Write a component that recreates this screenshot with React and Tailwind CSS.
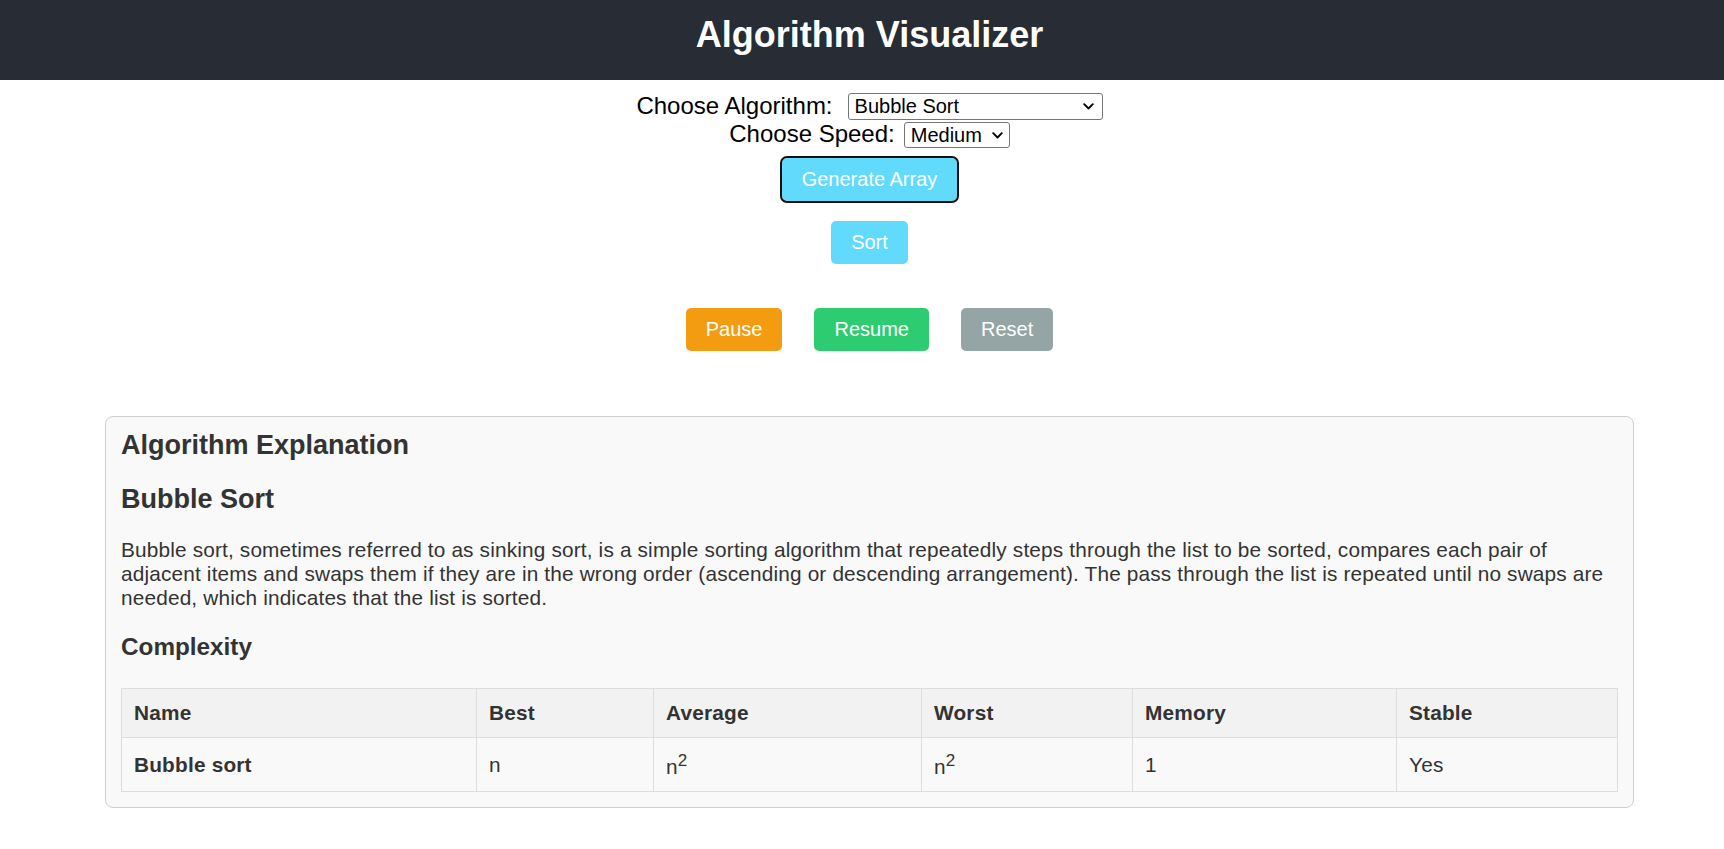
import React from "react";

function Chevron() {
  return (
    <svg width="11" height="7" viewBox="0 0 11 7" className="shrink-0">
      <polyline points="1.2,1.2 5.5,5.5 9.8,1.2" fill="none" stroke="#000" strokeWidth="1.9" strokeLinecap="round" strokeLinejoin="round" />
    </svg>
  );
}

function Btn({ children, bg, extra = "" }) {
  return (
    <button className={`rounded-[5px] px-[20px] py-[10px] text-[20px] leading-[normal] text-white ${bg} ${extra}`}>
      {children}
    </button>
  );
}

export default function App() {
  return (
    <div className="min-h-[849px] bg-white font-['Liberation_Sans',Arial,sans-serif] leading-[normal] overflow-hidden">
      <header className="h-[80px] bg-[#282c34] pt-[13.5px] pl-[15px] text-center">
        <h1 className="text-[36px] font-bold leading-[normal] text-white">Algorithm Visualizer</h1>
      </header>

      <div className="pl-[15px]">
        <div className="mt-[12px] flex flex-col items-center">
          <div className="flex items-center">
            <span className="text-[24px] leading-[normal] text-black">Choose Algorithm:</span>
            <div className="ml-[15px] flex h-[27px] w-[255px] items-center justify-between rounded-[3px] border border-[#767676] bg-white pl-[6px] pr-[8px] text-[20px] leading-[normal] text-black">
              <span>Bubble Sort</span>
              <Chevron />
            </div>
          </div>
          <div className="flex items-start">
            <span className="text-[24px] leading-[normal] text-black">Choose Speed:</span>
            <div className="ml-[9px] mt-[2px] flex h-[26px] w-[106px] items-center justify-between rounded-[3px] border border-[#767676] bg-white pl-[6px] pr-[6px] text-[20px] leading-[normal] text-black">
              <span>Medium</span>
              <Chevron />
            </div>
          </div>
        </div>

        <div className="mt-[10px] flex justify-center">
          <Btn bg="bg-[#61dafb]" extra="outline-2 outline-[#101010]">Generate Array</Btn>
        </div>
        <div className="mt-[20px] flex justify-center">
          <Btn bg="bg-[#61dafb]">Sort</Btn>
        </div>
        <div className="mt-[44px] flex justify-center gap-[32px]">
          <Btn bg="bg-[#f39c12]">Pause</Btn>
          <Btn bg="bg-[#2ecc71]">Resume</Btn>
          <Btn bg="bg-[#95a5a6]">Reset</Btn>
        </div>

        <div className="mx-auto mt-[65px] w-[1529px] rounded-[8px] border border-[#cfcfcf] bg-[#f9f9f9] px-[15px] pb-[15px] pt-[13px] text-[#333]">
          <h2 className="text-[27px] font-bold leading-[normal]">Algorithm Explanation</h2>
          <h2 className="mt-[23px] text-[27px] font-bold leading-[normal]">Bubble Sort</h2>
          <p className="mt-[23px] text-[20.8px] leading-[normal] tracking-[0.16px]">
            Bubble sort, sometimes referred to as sinking sort, is a simple sorting algorithm that repeatedly steps through the list to be sorted, compares each pair of adjacent items and swaps them if they are in the wrong order (ascending or descending arrangement). The pass through the list is repeated until no swaps are needed, which indicates that the list is sorted.
          </p>
          <h3 className="mt-[23px] text-[24.3px] font-bold leading-[normal]">Complexity</h3>
          <table className="mt-[27px] w-full table-fixed border-collapse text-[20.8px] leading-[normal] tracking-[0.2px]">
            <thead>
              <tr className="h-[49px] bg-[#f2f2f2]">
                <th className="w-[355px] border border-[#ddd] px-[12px] text-left font-bold">Name</th>
                <th className="w-[177px] border border-[#ddd] px-[12px] text-left font-bold">Best</th>
                <th className="w-[268px] border border-[#ddd] px-[12px] text-left font-bold">Average</th>
                <th className="w-[211px] border border-[#ddd] px-[12px] text-left font-bold">Worst</th>
                <th className="w-[264px] border border-[#ddd] px-[12px] text-left font-bold">Memory</th>
                <th className="w-[221px] border border-[#ddd] px-[12px] text-left font-bold">Stable</th>
              </tr>
            </thead>
            <tbody>
              <tr className="h-[54px] bg-[#f9f9f9]">
                <td className="border border-[#ddd] px-[12px] font-bold">Bubble sort</td>
                <td className="border border-[#ddd] px-[12px]">n</td>
                <td className="border border-[#ddd] px-[12px]">
                  n<span className="align-super text-[17px]">2</span>
                </td>
                <td className="border border-[#ddd] px-[12px]">
                  n<span className="align-super text-[17px]">2</span>
                </td>
                <td className="border border-[#ddd] px-[12px]">1</td>
                <td className="border border-[#ddd] px-[12px]">Yes</td>
              </tr>
            </tbody>
          </table>
        </div>
      </div>
    </div>
  );
}
